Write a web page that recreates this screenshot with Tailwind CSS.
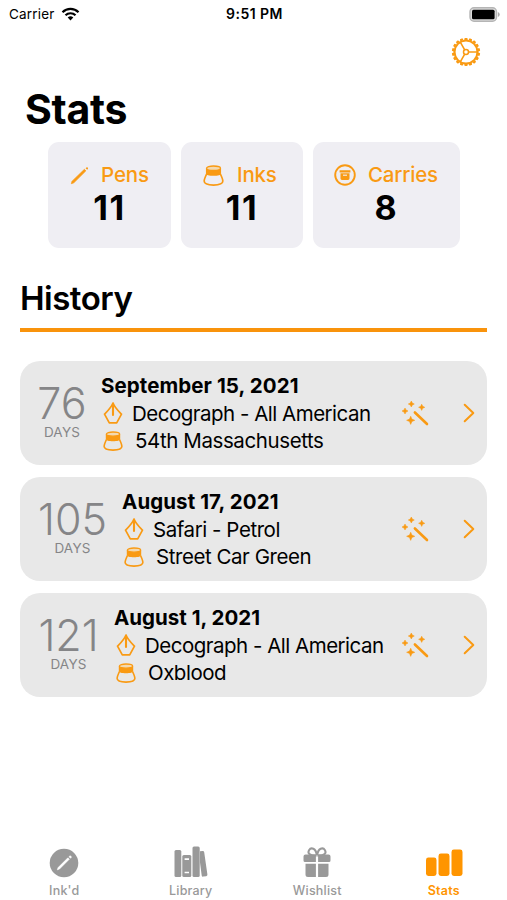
<!DOCTYPE html>
<html lang="en">
<head>
<meta charset="utf-8">
<title>Stats</title>
<script src="https://cdn.jsdelivr.net/npm/@tailwindcss/browser@4"></script>
</head>
<body class="bg-white">
<svg class="hidden">
  <symbol id="ink" viewBox="0 0 20 20"><path d="M3.4 8.500C2.600 10.800 1.100 13 1.100 15.300C1.100 18.200 4.500 19.100 10 19.100S18.900 18.200 18.900 15.300C18.900 13 17.400 10.800 16.600 8.500" fill="none" stroke="currentColor" stroke-width="1.600"/><path d="M2.800 3V7.800C2.800 9.600 5.800 10.300 10 10.300S17.200 9.600 17.200 7.800V3Z" fill="currentColor"/><ellipse cx="10" cy="3.100" rx="6.600" ry="2.100" fill="#f3d9b0" stroke="currentColor" stroke-width="1.300"/></symbol>
  <symbol id="nib" viewBox="0 0 20 24"><path d="M10 2C8.300 6.500 5.200 9.500 1.500 13.200L6.300 21.800H13.700L18.500 13.200C14.800 9.500 11.700 6.500 10 2Z" fill="none" stroke="currentColor" stroke-width="1.700" stroke-linejoin="round"/><path d="M10 3V14" stroke="currentColor" stroke-width="2.100" stroke-linecap="round"/></symbol>
  <symbol id="wand" viewBox="0 0 28 26"><path d="M13.900 12.500 26 24" stroke="currentColor" stroke-width="2.600" stroke-linecap="round"/><path d="M10.300 1l1 2 2 1-2 1-1 2-1-2-2-1 2-1zM20.700 4.200l1 2.100 2.100 1-2.100 1-1 2.100-1-2.100-2.100-1 2.100-1zM4 8l1 2 2 1-2 1-1 2-1-2-2-1 2-1zM9.700 16.200l1.200 2.900 2.900 1.200-2.900 1.200-1.200 2.900-1.200-2.900-2.900-1.200 2.900-1.200z" fill="currentColor" stroke="currentColor" stroke-width=".5"/></symbol>
  <symbol id="chev" viewBox="0 0 12 20"><path d="M1.700 1.700 10.300 10 1.700 18.300" fill="none" stroke="currentColor" stroke-width="2" stroke-linecap="round" stroke-linejoin="round"/></symbol>
  <symbol id="tooth" viewBox="0 0 30 30"><path d="M13.700 .9h2.600l.5 2.200h-3.600z" fill="currentColor"/></symbol>
</svg>
<main class="flex h-[900px] w-[507px] flex-col overflow-hidden bg-white font-[Inter,sans-serif] whitespace-nowrap text-black">
  <header class="grid h-7 grid-cols-3 items-center pr-[7px] pl-[9px] text-[13.5px] leading-7">
    <div class="flex items-center gap-1.5"><span class="tracking-[0.2px]">Carrier</span>
      <svg class="h-[14px] w-[19px]" viewBox="0 0 18 14"><path d="M1 5.200a11.400 11.400 0 0 1 16 0M4 8.300a7.100 7.100 0 0 1 10 0" fill="none" stroke="#000" stroke-width="2.200"/><path d="M6.200 10.600a4 4 0 0 1 5.600 0L9 13.500z"/></svg></div>
    <div class="text-center text-[14px] font-semibold tracking-[0.45px]">9:51 PM</div>
    <div class="flex justify-end"><svg class="h-[15px] w-[31px]" viewBox="0 0 31 15"><rect x="1" y=".8" width="26.5" height="13.4" rx="4" fill="#ddd" stroke="#b5b5b5" stroke-width="1.4"/><rect x="3" y="2.700" width="22.600" height="9.600" rx="1.500"/><path d="M28.900 5v5q1.800-.9 1.800-2.500T28.900 5" fill="#aaa"/></svg></div>
  </header>
  <div class="flex h-[50px] justify-end pt-[9px] pr-[26px] text-[#f99a13]">
    <svg class="size-[30px]" viewBox="0 0 30 30"><circle cx="15" cy="15" r="11.400" fill="none" stroke="currentColor" stroke-width="1.900"/><circle cx="15" cy="15" r="2.500" fill="none" stroke="currentColor" stroke-width="1.500"/><path d="M17.500 15H26.500M13.700 12.800 9.300 5.100M13.700 17.200 9.300 24.900" stroke="currentColor" stroke-width="1.600"/>
      <g><use href="#tooth" width="30" height="30"/><use href="#tooth" width="30" height="30" transform="rotate(20 15 15)"/><use href="#tooth" width="30" height="30" transform="rotate(40 15 15)"/><use href="#tooth" width="30" height="30" transform="rotate(60 15 15)"/><use href="#tooth" width="30" height="30" transform="rotate(80 15 15)"/><use href="#tooth" width="30" height="30" transform="rotate(100 15 15)"/><use href="#tooth" width="30" height="30" transform="rotate(120 15 15)"/><use href="#tooth" width="30" height="30" transform="rotate(140 15 15)"/><use href="#tooth" width="30" height="30" transform="rotate(160 15 15)"/><use href="#tooth" width="30" height="30" transform="rotate(180 15 15)"/><use href="#tooth" width="30" height="30" transform="rotate(200 15 15)"/><use href="#tooth" width="30" height="30" transform="rotate(220 15 15)"/><use href="#tooth" width="30" height="30" transform="rotate(240 15 15)"/><use href="#tooth" width="30" height="30" transform="rotate(260 15 15)"/><use href="#tooth" width="30" height="30" transform="rotate(280 15 15)"/><use href="#tooth" width="30" height="30" transform="rotate(300 15 15)"/><use href="#tooth" width="30" height="30" transform="rotate(320 15 15)"/><use href="#tooth" width="30" height="30" transform="rotate(340 15 15)"/></g></svg>
  </div>
  <h1 class="h-[64px] pl-[25px] text-[41px] leading-[62px] font-bold tracking-[-0.3px]">Stats</h1>
  <section class="flex h-[106px] gap-[10px] pl-[48px]">
    <div class="w-[123px] rounded-[11px] bg-[#efeef3] pt-[19px]">
      <div class="flex h-7 items-center pl-[22px] text-[20.5px] font-medium tracking-[-0.1px] text-[#f99a13]"><svg class="mr-[12px] h-5 w-[19px] shrink-0" viewBox="0 0 19 20"><path d="M1.300 18.700 2.100 16.200 14.400 4.300 15.900 5.800 3.800 17.800Z" fill="currentColor" stroke="currentColor" stroke-width=".7" stroke-linejoin="round"/><path d="M15.600 3.200 16.400 2.400a1.100 1.100 0 0 1 1.500 1.500l-.8.8z" fill="currentColor"/></svg>Pens</div>
      <div class="text-center text-[34px] leading-[37px] font-bold tracking-[1.7px]">11</div>
    </div>
    <div class="w-[122px] rounded-[11px] bg-[#efeef3] pt-[19px]">
      <div class="flex h-7 items-center pl-[22px] text-[20.5px] font-medium tracking-[-0.2px] text-[#f99a13]"><svg class="mr-[13px] size-[21px] shrink-0"><use href="#ink"/></svg>Inks</div>
      <div class="text-center text-[34px] leading-[37px] font-bold tracking-[1.7px]">11</div>
    </div>
    <div class="w-[147px] rounded-[11px] bg-[#efeef3] pt-[19px]">
      <div class="flex h-7 items-center pl-[21px] text-[20.5px] font-medium tracking-[-0.2px] text-[#f99a13]"><svg class="mr-[12px] size-[22px] shrink-0" viewBox="0 0 22 22"><circle cx="11" cy="11" r="9.800" fill="none" stroke="currentColor" stroke-width="1.900"/><path d="M5.600 6.200h10.800v2.200H5.600zM6.500 9.200h9v5.300q0 1.400-1.400 1.400H7.900q-1.400 0-1.400-1.400z" fill="currentColor"/><path d="M9 11.200h4" stroke="#efeef3" stroke-width="1.100"/></svg>Carries</div>
      <div class="pr-[2px] text-center text-[34px] leading-[37px] font-bold">8</div>
    </div>
  </section>
  <h2 class="mx-[20px] mt-[29px] h-[55px] border-b-[4px] border-[#f9930c] text-[33px] leading-[42px] font-[560] tracking-[-0.5px]">History</h2>
  <section class="mx-[20px] mt-[29px] flex flex-col gap-[12.5px] text-[20.5px] leading-[27.3px]">
    <article class="flex h-[103.5px] items-center rounded-[20px] bg-[#e8e8e8] pr-[12px] pl-[17px]">
      <div class="mr-[14px] flex w-[50px] flex-col items-center pb-[3px] text-[#858587]"><span class="text-[43px] leading-[42px] font-light">76</span><span class="text-[13.5px] leading-4 tracking-[0.2px]">DAYS</span></div>
      <div class="flex-1 pt-[1px]"><div class="font-bold tracking-[0.08px]">September 15, 2021</div>
        <div class="flex items-center tracking-[-0.5px]"><svg class="mr-[9px] ml-[2px] h-6 w-5 text-[#f99a13]"><use href="#nib"/></svg>Decograph - All American</div>
        <div class="flex items-center tracking-[-0.4px]"><svg class="mr-[12px] ml-[2px] size-5 text-[#f99a13]"><use href="#ink"/></svg>54th Massachusetts</div></div>
      <svg class="mr-[34px] h-[26px] w-[28px] shrink-0 text-[#f99a13]"><use href="#wand"/></svg><svg class="h-5 w-3 shrink-0 text-[#f99a13]"><use href="#chev"/></svg>
    </article>
    <article class="flex h-[103.5px] items-center rounded-[20px] bg-[#e8e8e8] pr-[12px] pl-[17px]">
      <div class="mr-[14px] flex w-[71px] flex-col items-center pb-[3px] text-[#858587]"><span class="text-[43px] leading-[42px] font-light">105</span><span class="text-[13.5px] leading-4 tracking-[0.2px]">DAYS</span></div>
      <div class="flex-1 pt-[1px]"><div class="font-bold tracking-[0.08px]">August 17, 2021</div>
        <div class="flex items-center tracking-[-0.45px]"><svg class="mr-[9px] ml-[2px] h-6 w-5 text-[#f99a13]"><use href="#nib"/></svg>Safari - Petrol</div>
        <div class="flex items-center tracking-[-0.45px]"><svg class="mr-[12px] ml-[2px] size-5 text-[#f99a13]"><use href="#ink"/></svg>Street Car Green</div></div>
      <svg class="mr-[34px] h-[26px] w-[28px] shrink-0 text-[#f99a13]"><use href="#wand"/></svg><svg class="h-5 w-3 shrink-0 text-[#f99a13]"><use href="#chev"/></svg>
    </article>
    <article class="flex h-[103.5px] items-center rounded-[20px] bg-[#e8e8e8] pr-[12px] pl-[17px]">
      <div class="mr-[14px] flex w-[63px] flex-col items-center pb-[3px] text-[#858587]"><span class="text-[43px] leading-[42px] font-light">121</span><span class="text-[13.5px] leading-4 tracking-[0.2px]">DAYS</span></div>
      <div class="flex-1 pt-[1px]"><div class="font-bold">August 1, 2021</div>
        <div class="flex items-center tracking-[-0.5px]"><svg class="mr-[9px] ml-[2px] h-6 w-5 text-[#f99a13]"><use href="#nib"/></svg>Decograph - All American</div>
        <div class="flex items-center tracking-[-0.5px]"><svg class="mr-[12px] ml-[2px] size-5 text-[#f99a13]"><use href="#ink"/></svg>Oxblood</div></div>
      <svg class="mr-[34px] h-[26px] w-[28px] shrink-0 text-[#f99a13]"><use href="#wand"/></svg><svg class="h-5 w-3 shrink-0 text-[#f99a13]"><use href="#chev"/></svg>
    </article>
  </section>
  <nav class="mt-auto grid h-[56px] grid-cols-4 pl-[1px] text-center text-[12.5px] leading-4 font-medium tracking-[0.2px] text-[#999]">
    <div class="flex flex-col items-center gap-[5px]"><svg class="h-[34px] w-[38px]" viewBox="0 0 38 34"><circle cx="19" cy="19" r="14.300" fill="#999"/><path d="m12.300 25.800.8-2.200L22.900 13.800l1.400 1.400-9.800 9.800zM24 12.700l.7-.6a1.100 1.100 0 0 1 1.500 1.500l-.7.7z" fill="#fff" stroke="#fff" stroke-width=".6"/></svg>Ink'd</div>
    <div class="flex flex-col items-center gap-[5px]"><svg class="h-[34px] w-[38px]" viewBox="0 0 38 34" fill="#999"><rect x="2.500" y="6" width="6.800" height="27" rx="1.500"/><rect x="10.300" y="11" width="9" height="22" rx="1.500"/><rect x="20.500" y="2.500" width="7.200" height="30.500" rx="1.500"/><path d="m28 7.300 2.500-.4q1.500-.2 1.700 1.300l3.200 22.400q.2 1.400-1.200 1.600l-2.900.4q-1.400.2-1.600-1.200l-1.700-13z"/><path d="M12.600 15.200h4.400M12.600 28.500h4.400" stroke="#fff" stroke-width="1.700"/></svg>Library</div>
    <div class="flex flex-col items-center gap-[5px]"><svg class="h-[34px] w-[38px]" viewBox="0 0 38 34"><path d="M18.700 11.500C11 12 9.500 8.800 11 6.200 13 3 18 4 18.700 11M19.300 11.500C27 12 28.500 8.800 27 6.200 25 3 20 4 19.300 11" fill="none" stroke="#999" stroke-width="2"/><path d="M7.500 10.500h10.400v7.500H7Q5.500 18 5.500 16.500v-4q0-2 2-2M20.100 10.500h10.400q2 0 2 2v4Q32.500 18 31 18H20.100zM7.500 19.800h10.400V33H10q-2.500 0-2.500-2.500zM20.100 19.800h10.400v10.700Q30.500 33 28 33h-7.900z" fill="#999"/></svg>Wishlist</div>
    <div class="flex flex-col items-center gap-[5px] text-[#ff9500]"><svg class="h-[34px] w-[38px]" viewBox="0 0 38 34" fill="currentColor"><rect x="1" y="13.500" width="10.500" height="18.500" rx="2.400"/><rect x="13.500" y="9.500" width="11" height="22.500" rx="2.400"/><rect x="26.500" y="5.500" width="11" height="26.500" rx="2.400"/></svg><span class="font-semibold">Stats</span></div>
  </nav>
</main>
</body>
</html>
